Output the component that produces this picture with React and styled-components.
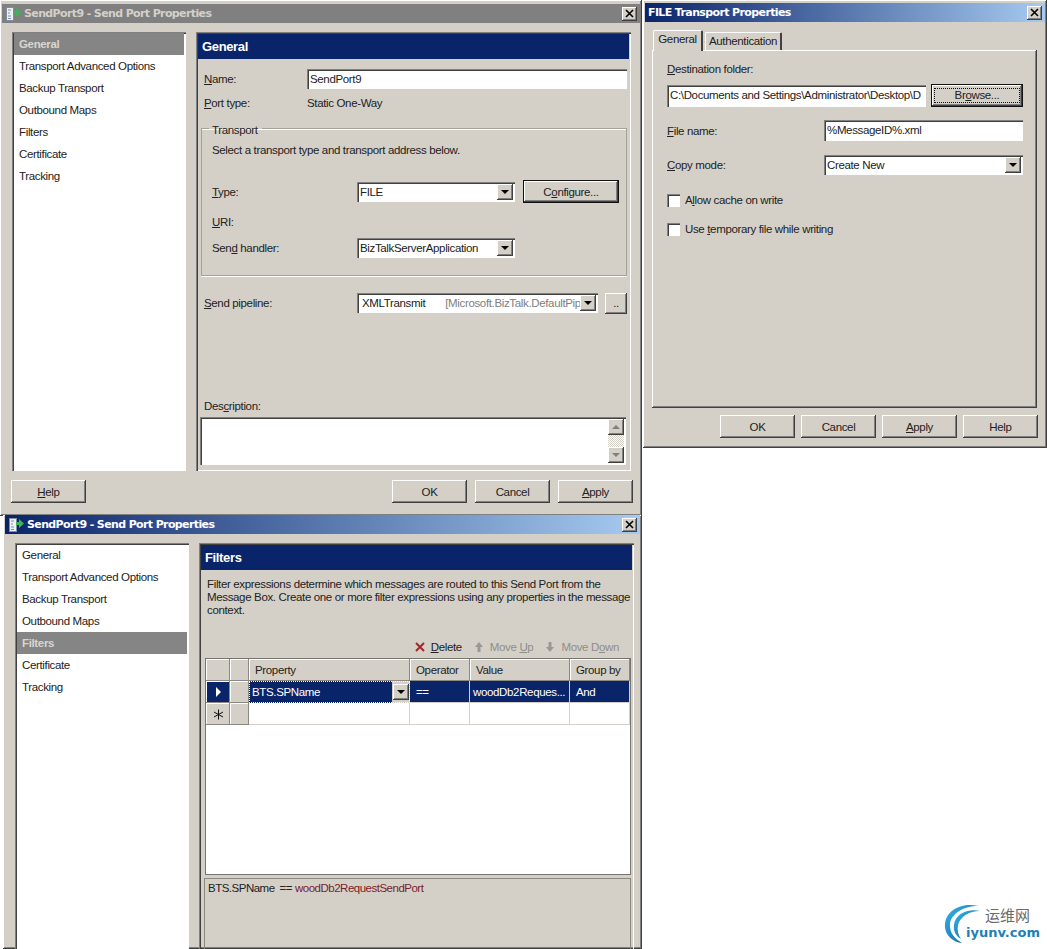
import React from 'react';
import styled, { createGlobalStyle, css } from 'styled-components';

const GlobalStyle = createGlobalStyle`
    html, body {
        margin: 0;
        background: #fff;
        overflow: hidden;
    }
    * {
        box-sizing: border-box;
    }
`;

const face = '#d4d0c8';
const raised = css`
    box-shadow: inset -1px -1px #404040, inset 1px 1px #fff, inset -2px -2px #808080;
`;
const sunken = css`
    box-shadow: inset 1px 1px #808080, inset 2px 2px #404040, inset -1px -1px #fff;
`;

const Desktop = styled.div`
    position: relative;
    width: 1047px;
    height: 949px;
    overflow: hidden;
    font-family: "Liberation Sans", Arial, sans-serif;
    font-size: 11.5px;
    letter-spacing: -0.35px;
    color: #222;
    background: #fff;
`;

const Window = styled.section`
    position: absolute;
    left: ${(p) => p.$left}px;
    top: ${(p) => p.$top}px;
    width: ${(p) => p.$width}px;
    height: ${(p) => p.$height}px;
    padding: ${(p) => p.$pad || '3px 2px 0'};
    background: ${face};
    display: flex;
    flex-direction: column;
    overflow: hidden;
    ${raised}
`;

const TitleBar = styled.header`
    flex: none;
    height: 19px;
    display: flex;
    align-items: center;
    gap: 3px;
    padding: 0 3px;
    font-family: "DejaVu Sans", sans-serif;
    font-size: 11px;
    font-weight: 700;
    letter-spacing: -0.62px;
    color: ${(p) => (p.$active ? '#fff' : '#d4d0c8')};
    background: ${(p) =>
        p.$active
            ? 'linear-gradient(90deg, #0a246a 0%, #a6caf0 100%)'
            : '#808080'};
`;

const TitleText = styled.span`
    flex: 1;
    white-space: nowrap;
`;

const CloseButton = styled.span`
    width: 15px;
    height: 14px;
    display: flex;
    align-items: center;
    justify-content: center;
    background: ${face};
    ${raised}
`;

const Content = styled.div`
    flex: 1;
    min-height: 0;
    display: flex;
    gap: 10px;
    padding: 9px 0 0 10px;
`;

const SideList = styled.ul`
    flex: none;
    width: 174px;
    height: ${(p) => p.$height}px;
    margin: 0;
    padding: 1px 2px;
    list-style: none;
    background: #fff;
    ${sunken}
`;

const SideItem = styled.li`
    height: 22px;
    line-height: 22px;
    padding-left: 5px;
    ${(p) =>
        p.$selected &&
        css`
            background: #858585;
            color: #d8d6d0;
            font-weight: 700;
        `}
`;

const Panel = styled.div`
    flex: none;
    width: 435px;
    height: ${(p) => p.$height}px;
    padding: 2px;
    display: flex;
    flex-direction: column;
    ${sunken}
`;

const PanelHeader = styled.h2`
    flex: none;
    height: 25px;
    margin: 0;
    padding-left: 4px;
    line-height: 25px;
    font-size: 13px;
    font-weight: 700;
    color: #fff;
    background: #0a246a;
`;

const PanelBody = styled.div`
    flex: 1;
    min-height: 0;
    display: flex;
    flex-direction: column;
    padding: ${(p) => p.$pad};
`;

const Row = styled.div`
    display: flex;
    align-items: center;
    flex: none;
    height: ${(p) => p.$height || 20}px;
    margin-top: ${(p) => p.$top || 0}px;
    padding-left: ${(p) => p.$indent || 0}px;
`;

const Label = styled.span`
    flex: none;
    width: ${(p) => p.$width}px;
    white-space: nowrap;
`;

const Field = styled.div`
    flex: ${(p) => (p.$width ? 'none' : '1')};
    width: ${(p) => (p.$width ? `${p.$width}px` : 'auto')};
    height: ${(p) => p.$height || 20}px;
    display: flex;
    align-items: center;
    padding-left: 3px;
    white-space: nowrap;
    overflow: hidden;
    background: #fff;
    ${sunken}
`;

const PathField = styled(Field)`
    padding-bottom: 2px;
`;

const TextArea = styled(Field)`
    margin: 4px 0 0 -1px;
`;

const ComboText = styled.span`
    flex: 1;
    min-width: 0;
    overflow: hidden;
    white-space: nowrap;
    display: flex;
    gap: ${(p) => p.$gap || 0}px;
    padding-left: ${(p) => p.$gap ? 2 : 0}px;
`;

const Muted = styled.span`
    color: #808080;
`;

const ArrowButton = styled.span`
    flex: none;
    width: 16px;
    height: 16px;
    margin-right: 2px;
    display: flex;
    align-items: center;
    justify-content: center;
    background: ${face};
    ${raised}
    &::after {
        content: '';
        border-left: 4px solid transparent;
        border-right: 4px solid transparent;
        border-top: 4px solid #000;
    }
`;

const Button = styled.button`
    flex: none;
    width: ${(p) => p.$width || 75}px;
    height: ${(p) => p.$height || 23}px;
    margin: 0;
    padding: 0;
    border: ${(p) => (p.$default ? '1px solid #111' : 'none')};
    font: inherit;
    letter-spacing: inherit;
    color: inherit;
    background: ${face};
    ${raised}
`;

const FocusRing = styled.span`
    display: block;
    margin: 3px;
    line-height: 13px;
    outline: 1px dotted #111;
`;

const Group = styled.fieldset`
    flex: none;
    width: 426px;
    height: 154px;
    margin: 9px 0 0;
    padding: 0 7px 0 10px;
    border: 1px solid #a5a29b;
    box-shadow: 0 1px #fff, inset 0 1px #fff;
`;

const Legend = styled.legend`
    padding: 0 4px 0 3px;
    margin-left: -3px;
    line-height: 13px;
    transform: translateY(2px);
`;

const Footer = styled.footer`
    display: flex;
    gap: ${(p) => p.$gap}px;
    padding: ${(p) => p.$pad};
`;

const Spacer = styled.div`
    flex: 1;
`;

const Scrollbar = styled.div`
    flex: none;
    width: 16px;
    height: 44px;
    margin: 0 2px 0 auto;
    display: flex;
    flex-direction: column;
    justify-content: space-between;
    background: repeating-conic-gradient(#d4d0c8 0% 25%, #fff 0% 50%) 0 0 / 2px 2px;
`;

const ScrollStep = styled.span`
    height: 16px;
    display: flex;
    align-items: center;
    justify-content: center;
    background: ${face};
    ${raised}
    &::after {
        content: '';
        border-left: 4px solid transparent;
        border-right: 4px solid transparent;
        ${(p) => (p.$up ? 'border-bottom' : 'border-top')}: 4px solid #808080;
    }
`;

const TabStrip = styled.div`
    display: flex;
    align-items: flex-end;
    flex: none;
    height: 28px;
    padding-left: 8px;
    gap: 2px;
`;

const Tab = styled.div`
    height: ${(p) => (p.$active ? 21 : 18)}px;
    width: ${(p) => p.$width}px;
    padding-top: 1px;
    margin-bottom: ${(p) => (p.$active ? -1 : 0)}px;
    text-align: center;
    line-height: 15px;
    background: ${face};
    border-radius: 2px 2px 0 0;
    border-top: 1px solid #fff;
    border-left: 1px solid #fff;
    border-right: 2px solid #404040;
    position: relative;
`;

const TabPage = styled.div`
    flex: none;
    width: 385px;
    height: 358px;
    margin-left: 7px;
    padding: 12px 14px 0 15px;
    ${raised}
`;

const CheckRow = styled.label`
    display: flex;
    align-items: center;
    gap: 5px;
    height: 14px;
    margin-top: ${(p) => p.$top}px;
`;

const CheckBox = styled.span`
    flex: none;
    width: 13px;
    height: 13px;
    background: #fff;
    ${sunken}
`;

const Paragraph = styled.p`
    margin: 0;
    padding: 0 4px;
    line-height: 13px;
    white-space: nowrap;
`;

const Toolbar = styled.div`
    display: flex;
    flex: none;
    justify-content: flex-end;
    align-items: center;
    gap: 12px;
    height: 16px;
    margin-top: 22px;
    padding-right: 13px;
`;

const ToolItem = styled.span`
    display: flex;
    align-items: center;
    gap: 6px;
    color: ${(p) => (p.$disabled ? '#8f8d88' : '#222')};
`;

const GridBox = styled.div`
    flex: none;
    width: 426px;
    height: 217px;
    margin: 3px 0 0 2px;
    background: #fff;
    border: 1px solid #77756f;
    display: flex;
    flex-direction: column;
`;

const GridRow = styled.div`
    display: grid;
    grid-template-columns: 24px 19px 161px 60px 100px 1fr;
    height: 22px;
    flex: none;
    ${(p) =>
        p.$selected &&
        css`
            background: #0a246a;
            color: #fff;
        `}
`;

const HeadCell = styled.div`
    display: flex;
    align-items: center;
    padding-left: 6px;
    background: ${face};
    box-shadow: inset -1px -1px #8b8982, inset 1px 1px #fff;
`;

const Cell = styled.div`
    display: flex;
    align-items: center;
    padding-left: ${(p) => p.$inset || 6}px;
    white-space: nowrap;
    overflow: hidden;
    border-right: 1px solid #d4d0c8;
    border-bottom: 1px solid #d4d0c8;
`;

const RowMark = styled(HeadCell)`
    justify-content: center;
    padding: 0;
    background: ${(p) => (p.$selected ? '#0a246a' : face)};
`;

const EditCell = styled.div`
    display: flex;
    align-items: center;
    padding-left: 3px;
    background: #0a246a;
    color: #fff;
    outline: 1px dotted #fff;
    outline-offset: -1px;
    box-shadow: inset -18px 0 ${face};
    position: relative;
`;

const EditArrow = styled(ArrowButton)`
    position: absolute;
    right: 1px;
    top: 3px;
    margin: 0;
`;

const Preview = styled.div`
    flex: none;
    width: 427px;
    height: 100px;
    margin: 3px 0 0 1px;
    padding: 3px;
    letter-spacing: -0.5px;
    border: 1px solid #8b8982;
`;

const Operator = styled.span`
    margin: 0 3px 0 5px;
`;

const Maroon = styled.span`
    color: #7a1d28;
`;

const Logo = styled.div`
    position: absolute;
    left: 944px;
    top: 903px;
    width: 100px;
    height: 42px;
`;

const LogoCjk = styled.span`
    position: absolute;
    left: 41px;
    top: 3px;
    font-family: "Noto Sans CJK SC", sans-serif;
    font-size: 15px;
    line-height: 18px;
    letter-spacing: 0;
    color: #6b6b6b;
`;

const LogoLatin = styled.span`
    position: absolute;
    left: 22px;
    top: 22px;
    font-family: "DejaVu Sans", sans-serif;
    font-size: 13px;
    font-weight: 700;
    line-height: 16px;
    letter-spacing: 0;
    color: #1f7fb8;
`;

function WindowIcon() {
    return (
        <svg width="16" height="16" viewBox="0 0 16 16">
            <rect x="1.5" y="1.5" width="7" height="13" fill="#eef0f2" stroke="#7f8fa3" />
            <path d="M3 4h3M3 7h2M3 10h3M3 12.5h3" stroke="#7f8fa3" />
            <path d="M8 5h3V2l5 4.5L11 11V8H8z" fill="#3db35a" />
        </svg>
    );
}

function CloseIcon() {
    return (
        <svg width="9" height="9" viewBox="0 0 9 9">
            <path d="M1 1l7 7M8 1L1 8" stroke="#000" strokeWidth="1.6" />
        </svg>
    );
}

const navItems = [
    'General',
    'Transport Advanced Options',
    'Backup Transport',
    'Outbound Maps',
    'Filters',
    'Certificate',
    'Tracking',
];

function SideNav({ selected, height }) {
    return (
        <SideList $height={height}>
            {navItems.map((item) => (
                <SideItem key={item} $selected={item === selected}>
                    {item}
                </SideItem>
            ))}
        </SideList>
    );
}

function Combo({ width, gap, children }) {
    return (
        <Field $width={width}>
            <ComboText $gap={gap}>{children}</ComboText>
            <ArrowButton />
        </Field>
    );
}

function PortWindow() {
    return (
        <Window $left={0} $top={0} $width={642} $height={516} $pad="4px 2px 0">
            <TitleBar>
                <WindowIcon />
                <TitleText>SendPort9 - Send Port Properties</TitleText>
                <CloseButton>
                    <CloseIcon />
                </CloseButton>
            </TitleBar>
            <Content>
                <SideNav selected="General" height={439} />
                <Panel $height={439}>
                    <PanelHeader>General</PanelHeader>
                    <PanelBody $pad="10px 2px 4px 3px">
                        <Row $indent={3}>
                            <Label $width={103}>
                                <u>N</u>ame:
                            </Label>
                            <Field $width={320}>SendPort9</Field>
                        </Row>
                        <Row $top={4} $indent={3}>
                            <Label $width={103}>
                                <u>P</u>ort type:
                            </Label>
                            Static One-Way
                        </Row>
                        <Group>
                            <Legend>Transport</Legend>
                            <Row $height={14} $top={8}>
                                Select a transport type and transport address below.
                            </Row>
                            <Row $height={23} $top={23}>
                                <Label $width={145}>
                                    <u>T</u>ype:
                                </Label>
                                <Combo width={158}>FILE</Combo>
                                <Spacer />
                                <Button $default $width={96}>
                                    C<u>o</u>nfigure...
                                </Button>
                            </Row>
                            <Row $height={14} $top={12}>
                                <u>U</u>RI:
                            </Row>
                            <Row $top={9}>
                                <Label $width={145}>
                                    Sen<u>d</u> handler:
                                </Label>
                                <Combo width={158}>BizTalkServerApplication</Combo>
                            </Row>
                        </Group>
                        <Row $top={16} $indent={3} $height={22}>
                            <Label $width={153}>
                                <u>S</u>end pipeline:
                            </Label>
                            <Combo width={241} gap={20}>
                                XMLTransmit
                                <Muted>[Microsoft.BizTalk.DefaultPip</Muted>
                            </Combo>
                            <Spacer />
                            <Button $width={22} $height={21}>
                                ..
                            </Button>
                        </Row>
                        <Spacer />
                        <Row $indent={3} $height={14}>
                            Des<u>c</u>ription:
                        </Row>
                        <TextArea $width={426} $height={48}>
                            <Scrollbar>
                                <ScrollStep $up />
                                <ScrollStep />
                            </Scrollbar>
                        </TextArea>
                    </PanelBody>
                </Panel>
            </Content>
            <Footer $gap={8} $pad="0 7px 13px 9px">
                <Button>
                    <u>H</u>elp
                </Button>
                <Spacer />
                <Button>OK</Button>
                <Button>Cancel</Button>
                <Button>
                    <u>A</u>pply
                </Button>
            </Footer>
        </Window>
    );
}

function TransportWindow() {
    return (
        <Window $left={643} $top={0} $width={404} $height={448}>
            <TitleBar $active>
                <TitleText>FILE Transport Properties</TitleText>
                <CloseButton>
                    <CloseIcon />
                </CloseButton>
            </TitleBar>
            <TabStrip>
                <Tab $active $width={50}>General</Tab>
                <Tab $width={77}>Authentication</Tab>
            </TabStrip>
            <TabPage>
                <Row $height={14}>
                    <u>D</u>estination folder:
                </Row>
                <Row $top={8} $height={23}>
                    <PathField $width={259} $height={22}>
                        C:\Documents and Settings\Administrator\Desktop\D
                    </PathField>
                    <Spacer />
                    <Button $default $width={92}>
                        <FocusRing>
                            Br<u>o</u>wse...
                        </FocusRing>
                    </Button>
                </Row>
                <Row $top={13} $height={21}>
                    <Label $width={157}>
                        <u>F</u>ile name:
                    </Label>
                    <PathField $width={199} $height={21}>%MessageID%.xml</PathField>
                </Row>
                <Row $top={14}>
                    <Label $width={157}>
                        <u>C</u>opy mode:
                    </Label>
                    <Combo width={199}>Create New</Combo>
                </Row>
                <CheckRow $top={18}>
                    <CheckBox />
                    <span>
                        A<u>l</u>low cache on write
                    </span>
                </CheckRow>
                <CheckRow $top={15}>
                    <CheckBox />
                    <span>
                        Use <u>t</u>emporary file while writing
                    </span>
                </CheckRow>
            </TabPage>
            <Footer $gap={6} $pad="7px 7px 0 0">
                <Spacer />
                <Button>OK</Button>
                <Button>Cancel</Button>
                <Button>
                    <u>A</u>pply
                </Button>
                <Button>Help</Button>
            </Footer>
        </Window>
    );
}

function FiltersWindow() {
    return (
        <Window $left={3} $top={515} $width={639} $height={434} $pad="0 2px">
            <TitleBar $active>
                <WindowIcon />
                <TitleText>SendPort9 - Send Port Properties</TitleText>
                <CloseButton>
                    <CloseIcon />
                </CloseButton>
            </TitleBar>
            <Content>
                <SideNav selected="Filters" height={430} />
                <Panel $height={430}>
                    <PanelHeader>Filters</PanelHeader>
                    <PanelBody $pad="8px 0 0 2px">
                        <Paragraph>
                            Filter expressions determine which messages are routed to this Send Port from the
                            <br />
                            Message Box. Create one or more filter expressions using any properties in the message
                            <br />
                            context.
                        </Paragraph>
                        <Toolbar>
                            <ToolItem>
                                <svg width="10" height="10" viewBox="0 0 10 10">
                                    <path d="M1 1l8 8M9 1L1 9" stroke="#a2262c" strokeWidth="2" />
                                </svg>
                                <span>
                                    <u>D</u>elete
                                </span>
                            </ToolItem>
                            <ToolItem $disabled>
                                <svg width="10" height="10" viewBox="0 0 10 10">
                                    <path d="M5 0l4 5H6.5v5h-3V5H1z" fill="#9a9893" />
                                </svg>
                                <span>
                                    Move <u>U</u>p
                                </span>
                            </ToolItem>
                            <ToolItem $disabled>
                                <svg width="10" height="10" viewBox="0 0 10 10">
                                    <path d="M5 10l4-5H6.5V0h-3v5H1z" fill="#9a9893" />
                                </svg>
                                <span>
                                    Move D<u>o</u>wn
                                </span>
                            </ToolItem>
                        </Toolbar>
                        <GridBox>
                            <GridRow>
                                <HeadCell />
                                <HeadCell />
                                <HeadCell>Property</HeadCell>
                                <HeadCell>Operator</HeadCell>
                                <HeadCell>Value</HeadCell>
                                <HeadCell>Group by</HeadCell>
                            </GridRow>
                            <GridRow $selected>
                                <RowMark $selected>
                                    <svg width="7" height="10" viewBox="0 0 7 10">
                                        <path d="M1 0l5 5-5 5z" fill="#fff" />
                                    </svg>
                                </RowMark>
                                <HeadCell />
                                <EditCell>
                                    BTS.SPName
                                    <EditArrow />
                                </EditCell>
                                <Cell>==</Cell>
                                <Cell $inset={3}>woodDb2Reques...</Cell>
                                <Cell>And</Cell>
                            </GridRow>
                            <GridRow>
                                <RowMark>
                                    <svg width="11" height="11" viewBox="0 0 11 11">
                                        <path d="M5.5 0.5v10M1 3l9 5M10 3l-9 5" stroke="#111" strokeWidth="1" />
                                    </svg>
                                </RowMark>
                                <HeadCell />
                                <Cell />
                                <Cell />
                                <Cell />
                                <Cell />
                            </GridRow>
                        </GridBox>
                        <Preview>
                            BTS.SPName
                            <Operator>==</Operator>
                            <Maroon>woodDb2RequestSendPort</Maroon>
                        </Preview>
                    </PanelBody>
                </Panel>
            </Content>
        </Window>
    );
}

function SiteLogo() {
    return (
        <Logo>
            <svg width="44" height="42" viewBox="0 0 44 42">
                <defs>
                    <linearGradient id="logoArc" x1="0" y1="0" x2="1" y2="1">
                        <stop offset="0" stopColor="#35b6e8" />
                        <stop offset="1" stopColor="#0a5f9e" />
                    </linearGradient>
                </defs>
                <path
                    d="M34 3C20-1 2 6 1 21c-1 10 7 18 17 19C9 35 5 28 6 20 8 10 20 3 34 3z"
                    fill="url(#logoArc)"
                />
                <path
                    d="M36 8C25 5 11 10 10 22c-1 6 2 11 7 14-3-4-4-9-3-14 2-8 11-14 22-14z"
                    fill="url(#logoArc)"
                />
            </svg>
            <LogoCjk>运维网</LogoCjk>
            <LogoLatin>iyunv.com</LogoLatin>
        </Logo>
    );
}

function App() {
    return (
        <Desktop>
            <GlobalStyle />
            <PortWindow />
            <TransportWindow />
            <FiltersWindow />
            <SiteLogo />
        </Desktop>
    );
}

export default App;
